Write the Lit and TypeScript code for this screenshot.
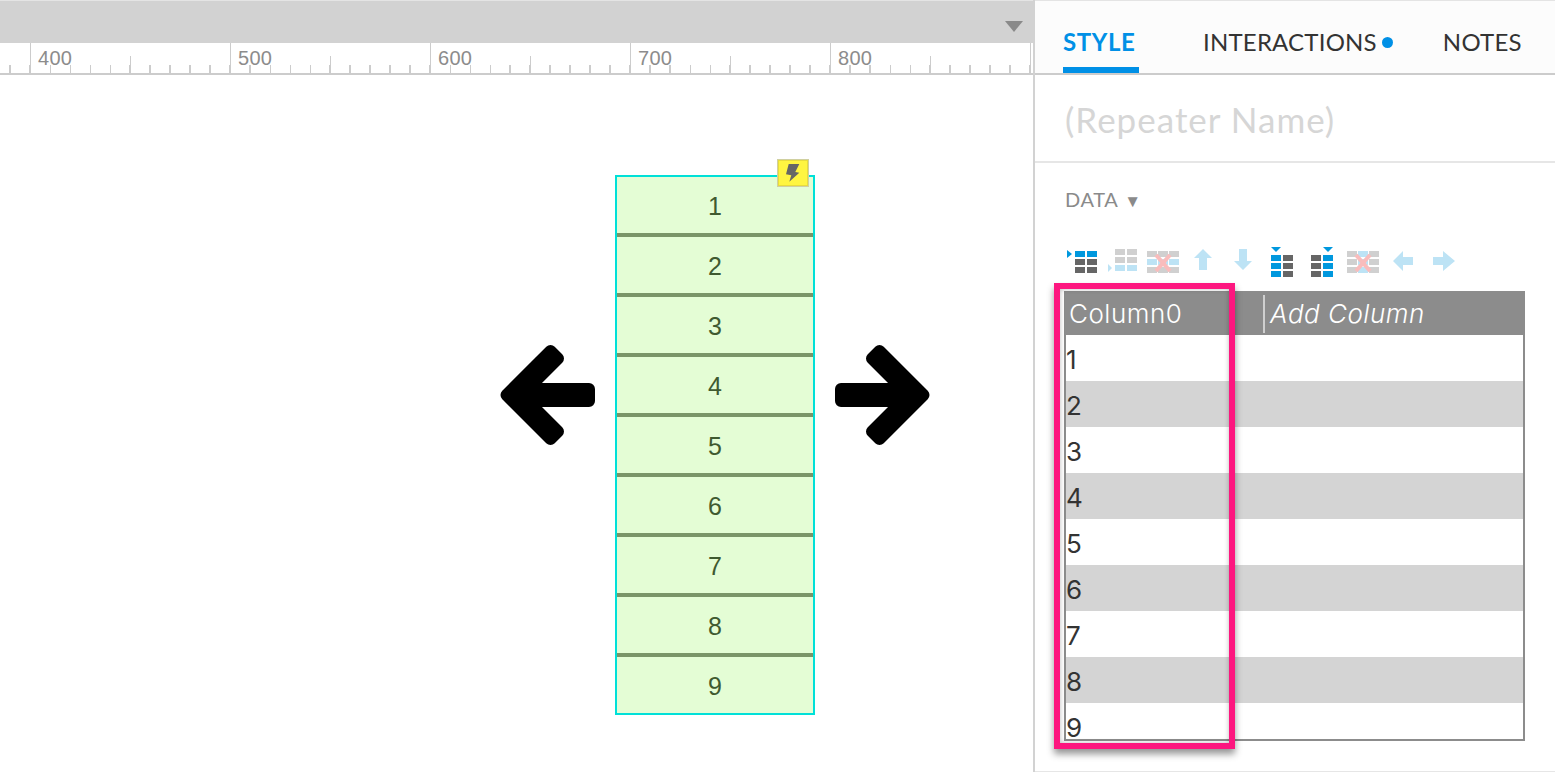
import { LitElement, html, css, svg } from "lit";
import { customElement } from "lit/decorators.js";

const BLUE = "#0098de";
const DARK = "#666666";
const LB = "#bde3f5";
const LG = "#d0d0d0";
const PINK = "#f9bcbc";

const cell = (x: number, y: number, w: number, h: number, f: string) =>
  svg`<rect x=${x} y=${y} width=${w} height=${h} fill=${f}></rect>`;

const grid = (xs: number[], ys: number[], w: number, color: (c: number, r: number) => string) =>
  ys.map((y, r) => xs.map((x, c) => cell(x, y, w, 6, color(c, r))));

const cross = svg`<path d="M11 9 L25 25 M25 9 L11 25" stroke=${PINK} stroke-width="4" fill="none"></path>`;

const icons = [
  svg`<path d="M2 4 L7 8 L2 12Z" fill=${BLUE}></path>${grid([10, 22], [5, 13, 21], 10, (_c, r) => (r === 0 ? BLUE : DARK))}`,
  svg`<path d="M3 18 L7 22 L3 26Z" fill=${LB}></path>${grid([10, 22], [3, 11, 19], 10, (_c, r) => (r === 2 ? LB : LG))}`,
  svg`${grid([2, 13, 24], [5, 13, 21], 10, (_c, r) => (r === 1 ? LB : LG))}${cross}`,
  svg`<path d="M18 3 L27 12 L22 12 L22 24 L14 24 L14 12 L9 12Z" fill=${LB}></path>`,
  svg`<path d="M18 24 L27 15 L22 15 L22 3 L14 3 L14 15 L9 15Z" fill=${LB}></path>`,
  svg`<path d="M6 1 L16 1 L11 6Z" fill=${BLUE}></path>${grid([6, 18], [9, 17, 25], 10, (c) => (c === 0 ? BLUE : DARK))}`,
  svg`<path d="M18 1 L28 1 L23 6Z" fill=${BLUE}></path>${grid([6, 18], [9, 17, 25], 10, (c) => (c === 1 ? BLUE : DARK))}`,
  svg`${grid([2, 13, 24], [5, 13, 21], 10, (c) => (c === 1 ? LB : LG))}${cross}`,
  svg`<path d="M8 15 L18 5 L18 11 L28 11 L28 19 L18 19 L18 25Z" fill=${LB}></path>`,
  svg`<path d="M8 11 L18 11 L18 5 L30 15 L18 25 L18 19 L8 19Z" fill=${LB}></path>`,
];

const ARROW =
  "M11.5 55 L55.5 11 L63 18.5 L32.5 49 L94 49 L94 61 L32.5 61 L63 91.5 L55.5 99Z";

@customElement("app-root")
export class AppRoot extends LitElement {
  static styles = css`
    :host {
      display: flex;
      width: 1555px;
      height: 772px;
      overflow: hidden;
      background: #fff;
      font-family: "Lato", "Liberation Sans", sans-serif;
    }
    .canvas {
      position: relative;
      width: 1033px;
      flex: none;
      border-right: 2px solid #d2d2d2;
    }
    .topbar {
      height: 42px;
      border-top: 1px solid #e4e4e4;
      background: #d2d2d2;
      display: flex;
      justify-content: flex-end;
      align-items: flex-start;
      padding-right: 10px;
    }
    .caret {
      width: 0;
      height: 0;
      margin-top: 20px;
      border-left: 9.5px solid transparent;
      border-right: 9.5px solid transparent;
      border-top: 11px solid #8a8a8a;
    }
    .ruler {
      height: 30px;
      border-bottom: 2px solid #cccccc;
      display: flex;
      overflow: hidden;
      margin-left: -170px;
      font-family: "Liberation Sans", sans-serif;
    }
    .seg {
      position: relative;
      flex: none;
      width: 200px;
      box-sizing: border-box;
      padding: 7px 0 0 7px;
      border-left: 1.5px solid #cccccc;
      font-size: 20px;
      line-height: 16px;
      letter-spacing: 0.3px;
      color: #8c8c8c;
      background:
        repeating-linear-gradient(90deg, transparent 0 18.5px, #cccccc 18.5px 20px) bottom left / 200px 8px no-repeat;
    }
    .seg::after {
      content: "";
      position: absolute;
      left: 98.5px;
      bottom: 0;
      width: 1.5px;
      height: 17px;
      background: #cccccc;
    }
    .repeater {
      position: absolute;
      left: 615px;
      top: 175px;
      width: 200px;
      box-sizing: border-box;
      border: 2px solid #00e0d8;
      background: #e4fdd5;
      font-family: "Liberation Sans", sans-serif;
    }
    .item {
      height: 56px;
      display: flex;
      align-items: center;
      justify-content: center;
      font-size: 25px;
      color: #3f5a30;
    }
    .item span {
      display: block;
      padding-top: 2px;
    }
    .item + .item {
      border-top: 4px solid #7a9568;
    }
    .badge {
      position: absolute;
      left: 777px;
      top: 159px;
      width: 32px;
      height: 28px;
      box-sizing: border-box;
      border: 1px solid #d0d0a0;
      background: #fff541;
      box-shadow: inset 0 0 0 1px #e8dc3c;
      display: flex;
      align-items: center;
      justify-content: center;
    }
    .arrow {
      position: absolute;
      top: 340px;
      width: 110px;
      height: 110px;
    }
    .arrow.l {
      left: 495px;
    }
    .arrow.r {
      left: 825px;
      transform: scaleX(-1);
    }
    .panel {
      flex: 1;
      min-width: 0;
      height: 771px;
      border-bottom: 1px solid #e6e6e6;
    }
    .tabs {
      height: 72px;
      border-top: 1px solid #e4e4e4;
      border-bottom: 2px solid #cccccc;
      background: #fcfcfc;
      display: flex;
      padding-left: 28px;
      font-size: 24px;
      color: #333333;
    }
    .tab {
      height: 72px;
      box-sizing: border-box;
      padding-top: 24px;
      line-height: 34px;
      white-space: nowrap;
    }
    .tab.active {
      width: 76px;
      color: #0090e6;
      font-weight: 700;
      letter-spacing: 0.6px;
      border-bottom: 6px solid #0090e6;
    }
    .dot {
      display: inline-block;
      width: 11px;
      height: 11px;
      border-radius: 50%;
      background: #0090e6;
      margin-left: 5px;
      vertical-align: 3px;
    }
    .t2 {
      margin-left: 64px;
      letter-spacing: 0.2px;
    }
    .t3 {
      margin-left: 50px;
      letter-spacing: 0.25px;
    }
    .name {
      height: 86px;
      border-bottom: 2px solid #e6e6e6;
      padding-left: 30px;
      font-size: 35px;
      letter-spacing: 1px;
      line-height: 88px;
      color: #d6d6d6;
    }
    .data {
      padding: 24px 0 1px 30px;
      height: 24px;
      line-height: 24px;
      font-size: 20px;
      letter-spacing: 0.6px;
      color: #8a8a8a;
    }
    .data span {
      font-size: 17px;
      margin-left: 1px;
    }
    .toolbar {
      display: flex;
      margin: 34px 0 0 30px;
      height: 32px;
    }
    .toolbar svg {
      width: 40px;
      height: 32px;
      flex: none;
    }
    .table {
      position: relative;
      margin: 13px 0 0 29px;
      width: 461px;
      height: 450px;
      box-sizing: border-box;
    }
    .clip {
      height: 450px;
      box-sizing: border-box;
      border: 2px solid #8c8c8c;
      border-top: 0;
      overflow: hidden;
      background: #fff;
    }
    .head {
      height: 44px;
      background: #8c8c8c;
      color: #fff;
      display: flex;
      align-items: center;
      font-family: "Inter", sans-serif;
      font-weight: 300;
      font-size: 26px;
      letter-spacing: 0.5px;
      margin: 0 -2px;
      padding: 1px 0 0 5px;
      box-sizing: border-box;
    }
    .c0 {
      width: 194px;
      flex: none;
    }
    .c1 {
      border-left: 2px solid #cfcfcf;
      padding-left: 5px;
      font-style: italic;
      line-height: 38px;
    }
    .row {
      height: 46px;
      line-height: 50px;
      font-family: "Inter", sans-serif;
      font-weight: 400;
      font-size: 26px;
      color: #333333;
    }
    .row:nth-child(even) {
      background: #d4d4d4;
    }
    .mark {
      position: absolute;
      left: -10px;
      top: -8px;
      width: 181px;
      height: 466px;
      box-sizing: border-box;
      border: 6px solid #fd167f;
      box-shadow:
        0 5px 7px rgba(0, 0, 0, 0.42),
        inset 0 0 5px rgba(0, 0, 0, 0.28);
    }
  `;

  render() {
    const ruler = ["", "400", "500", "600", "700", "800", ""];
    const items = [1, 2, 3, 4, 5, 6, 7, 8, 9];
    return html`
      <div class="canvas">
        <div class="topbar"><div class="caret"></div></div>
        <div class="ruler">
          ${ruler.map((n) => html`<div class="seg">${n}</div>`)}
        </div>
        <div class="repeater">
          ${items.map((n) => html`<div class="item"><span>${n}</span></div>`)}
        </div>
        <div class="badge">
          <svg width="14" height="18" viewBox="0 0 14 18">
            <path d="M2.7 0 L13.3 0 L9.3 8 L13.3 8.7 L3.3 17.7 L5.3 11.3 L0 10.3Z" fill="#666666"></path>
          </svg>
        </div>
        <svg class="arrow l" viewBox="0 0 110 110">
          <path d=${ARROW} fill="#000" stroke="#000" stroke-width="12" stroke-linejoin="round"></path>
        </svg>
        <svg class="arrow r" viewBox="0 0 110 110">
          <path d=${ARROW} fill="#000" stroke="#000" stroke-width="12" stroke-linejoin="round"></path>
        </svg>
      </div>
      <div class="panel">
        <div class="tabs">
          <div class="tab active">STYLE</div>
          <div class="tab t2">INTERACTIONS<span class="dot"></span></div>
          <div class="tab t3">NOTES</div>
        </div>
        <div class="name">(Repeater Name)</div>
        <div class="data">DATA <span>▼</span></div>
        <div class="toolbar">
          ${icons.map((i) => html`<svg viewBox="0 0 40 32">${i}</svg>`)}
        </div>
        <div class="table">
          <div class="clip">
            <div class="head">
              <div class="c0">Column0</div>
              <div class="c1">Add Column</div>
            </div>
            <div>
              ${items.map((n) => html`<div class="row">${n}</div>`)}
            </div>
          </div>
          <div class="mark"></div>
        </div>
      </div>
    `;
  }
}
